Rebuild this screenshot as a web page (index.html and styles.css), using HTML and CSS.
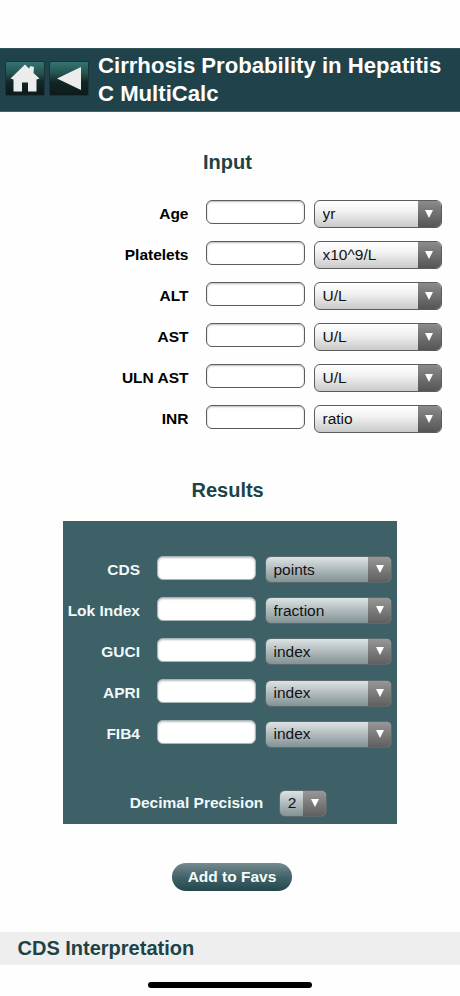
FILE: index.html
```html
<!DOCTYPE html>
<html lang="en">
<head>
  <meta charset="UTF-8" />
  <meta name="viewport" content="width=device-width, initial-scale=1" />
  <title>Cirrhosis Probability in Hepatitis C MultiCalc</title>
  <link rel="stylesheet" href="styles.css">
</head>
<body>
  <!-- Top bar -->
  <header class="topbar">
    <a class="nav-btn" aria-label="Home">
      <svg width="30" height="30" viewBox="0 0 30 30">
        <path fill="#ececec" d="M15 0.500 L19 4.500 L20.500 2 L24 3 L23.500 9 L29.500 14.500 L26.500 15.500 V27.500 H18 V18.500 H12 V27.500 H3.500 V15.500 L0.500 14.500 Z"/>
      </svg>
    </a>
    <a class="nav-btn" aria-label="Back">
      <svg width="26" height="24" viewBox="0 0 26 24">
        <path fill="#ececec" d="M25 0 V23 L1 11.500 Z"/>
      </svg>
    </a>
    <h1>Cirrhosis Probability in Hepatitis C MultiCalc</h1>
  </header>

  <form>
    <!-- Input values -->
    <h2 class="input-title">Input</h2>
    <div class="inputs">
      <div class="row">
        <label>Age</label>
        <input type="text">
        <div class="select"><select><option>yr</option></select></div>
      </div>
      <div class="row">
        <label>Platelets</label>
        <input type="text">
        <div class="select"><select><option>x10^9/L</option></select></div>
      </div>
      <div class="row">
        <label>ALT</label>
        <input type="text">
        <div class="select"><select><option>U/L</option></select></div>
      </div>
      <div class="row">
        <label>AST</label>
        <input type="text">
        <div class="select"><select><option>U/L</option></select></div>
      </div>
      <div class="row">
        <label>ULN AST</label>
        <input type="text">
        <div class="select"><select><option>U/L</option></select></div>
      </div>
      <div class="row">
        <label>INR</label>
        <input type="text">
        <div class="select"><select><option>ratio</option></select></div>
      </div>
    </div>

    <!-- Calculated results -->
    <h2 class="results-title">Results</h2>
    <div class="results">
      <div class="row">
        <label>CDS</label>
        <input type="text" readonly>
        <div class="select"><select><option>points</option></select></div>
      </div>
      <div class="row">
        <label>Lok Index</label>
        <input type="text" readonly>
        <div class="select"><select><option>fraction</option></select></div>
      </div>
      <div class="row">
        <label>GUCI</label>
        <input type="text" readonly>
        <div class="select"><select><option>index</option></select></div>
      </div>
      <div class="row">
        <label>APRI</label>
        <input type="text" readonly>
        <div class="select"><select><option>index</option></select></div>
      </div>
      <div class="row">
        <label>FIB4</label>
        <input type="text" readonly>
        <div class="select"><select><option>index</option></select></div>
      </div>
      <div class="precision">
        <label>Decimal Precision</label>
        <div class="select"><select><option>2</option></select></div>
      </div>
    </div>

    <button class="favs" type="button">Add to Favs</button>
  </form>

  <h3 class="section-bar">CDS Interpretation</h3>
  <div class="home-indicator"></div>
</body>
</html>
```
FILE: styles.css
```css
*, *::before, *::after {
  box-sizing: border-box;
}
html, body {
  margin: 0;
  padding: 0;
  background: #fefefe;
  overflow: hidden;
}
body {
  height: 996px;
  padding-top: 48px;
  color: #000;
  font-family: "Liberation Sans", Arial, Helvetica, sans-serif;
  font-size: 15.5px;
}

/* Top bar */
.topbar {
  display: flex;
  align-items: flex-start;
  height: 64px;
  padding: 12px 0 0 5px;
  background: #20424a;
  border-top: 1px solid #2f5359;
  border-bottom: 1px solid #45636a;
}
.nav-btn {
  display: flex;
  align-items: center;
  justify-content: center;
  width: 40px;
  height: 35px;
  margin-right: 4px;
  border: 1px solid #18343a;
  border-radius: 2px;
  background: linear-gradient(#347470 0, #24524f 35%, #122625 60%, #0e1a1b 100%);
}
h1 {
  flex: 1;
  margin: -9px 0 0 5px;
  color: #fff;
  font-size: 22.15px;
  line-height: 28px;
}

h2 {
  margin: 0;
  color: #1d4345;
  font-size: 20px;
  line-height: 24px;
}
.input-title {
  padding: 38px 0 0 203px;
}
.results-title {
  padding: 31px 0 0 191.500px;
}

/* Rows */
.row {
  display: flex;
  height: 41.1px;
}
label {
  font-weight: bold;
  line-height: 28px;
  text-align: right;
  white-space: nowrap;
}
.row label {
  width: 188.500px;
}
input {
  width: 99px;
  height: 24px;
  margin: 0 9px 0 17.500px;
  padding: 0 6px;
  border: 1px solid #5c5c5c;
  border-radius: 6px;
  background: #fff;
  box-shadow: inset 0 1px 2px #bbb;
  font: inherit;
}
.inputs {
  padding-top: 26px;
}

/* Dropdowns with a shaded arrow cap */
.select {
  position: relative;
  display: flex;
  width: 128px;
  height: 28px;
  overflow: hidden;
  border: 1px solid #5c5c5c;
  border-radius: 6px;
  background: linear-gradient(#fff, #f2f2f2 40%, #c9c9c9);
}
.select::before {
  content: "";
  position: absolute;
  top: 0;
  right: 0;
  bottom: 0;
  width: 23px;
  background: linear-gradient(#8b8b8b, #555);
}
.select::after {
  content: "";
  position: absolute;
  top: 9px;
  right: 8px;
  border: 4px solid transparent;
  border-top: 8px solid #fff;
  border-bottom: 0;
}
select {
  width: 100%;
  padding: 0 0 1px 7.500px;
  border: 0;
  background: transparent;
  color: #111;
  font: inherit;
  appearance: none;
}

/* Results panel */
.results {
  width: 334px;
  height: 303px;
  margin: 19.400px 0 0 63px;
  padding-top: 34.600px;
  background: #3e6067;
}
.results .row {
  height: 41.200px;
}
.results label {
  color: #f0fafa;
}
.results .row label {
  width: 77px;
}
.results input {
  margin-left: 17px;
  border-color: #a9b5b8;
}
.results .select {
  width: 127px;
  height: 27px;
  margin-top: 0.500px;
  border-color: #5d696c;
  background: linear-gradient(#dde3e4, #b4bec0 45%, #839295);
}
.results .select::before {
  background: linear-gradient(#979797, #5f5f5f);
}
.results .select::after {
  top: 8px;
  right: 7px;
}
.precision {
  display: flex;
  padding: 28px 0 0 66.800px;
}
.results .precision .select {
  width: 48px;
  margin-left: 16px;
}

.favs {
  display: block;
  width: 120px;
  height: 28px;
  margin: 39px 0 0 172px;
  padding: 0;
  border: 0;
  border-radius: 14px;
  background: linear-gradient(#758b8f, #42636a 50%, #24464d);
  color: #f4fcfc;
  font: bold 15.5px "Liberation Sans", Arial, sans-serif;
}

.section-bar {
  height: 33px;
  margin: 40.700px 0 0;
  padding-left: 17.500px;
  background: #eee;
  color: #1d4345;
  font-size: 20px;
  line-height: 33px;
}
.home-indicator {
  width: 164px;
  height: 6px;
  margin: 17px 0 0 148px;
  border-radius: 3px;
  background: #000;
}
```
